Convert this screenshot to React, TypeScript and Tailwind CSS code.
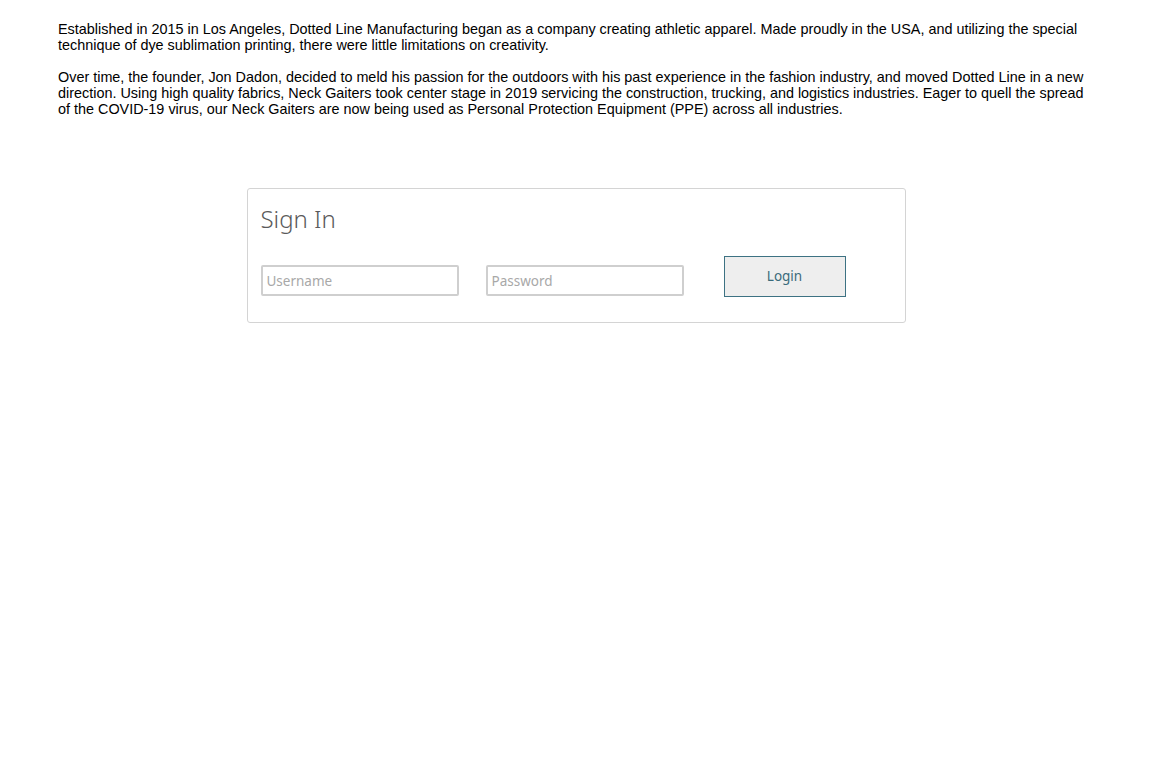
export default function App() {
  return (
    <div className="min-h-screen w-full bg-white">
      <div className="pl-[58px] pr-[60px] pt-[21px] font-['Liberation_Sans',Arial,sans-serif] text-[14.4px] leading-4 text-black">
        <p>
          Established in 2015 in Los Angeles, Dotted Line Manufacturing began as a company creating athletic apparel. Made proudly in the USA, and utilizing the special technique of dye sublimation printing, there were little limitations on creativity.
        </p>
        <p className="mt-4">
          Over time, the founder, Jon Dadon, decided to meld his passion for the outdoors with his past experience in the fashion industry, and moved Dotted Line in a new direction. Using high quality fabrics, Neck Gaiters took center stage in 2019 servicing the construction, trucking, and logistics industries. Eager to quell the spread of the COVID-19 virus, our Neck Gaiters are now being used as Personal Protection Equipment (PPE) across all industries.
        </p>
      </div>

      <div className="mt-[71px] flex justify-center">
        <div className="w-[659px] rounded-[3px] border border-[#d4d4d4] px-[13px] pb-[25px] pt-[14px] font-['Noto_Sans',sans-serif]">
          <h2 className="text-[24px] font-light leading-8 text-[#5a5a5a]">Sign In</h2>
          <div className="mt-[21px] flex items-end">
            <input
              type="text"
              placeholder="Username"
              className="mb-[1px] h-[31px] w-[198px] rounded-[2px] border-2 border-[#cfcfcf] px-[4px] text-[13.5px] text-[#555] placeholder:text-[#a8a8a8] outline-none"
            />
            <input
              type="password"
              placeholder="Password"
              className="mb-[1px] ml-[27px] h-[31px] w-[198px] rounded-[2px] border-2 border-[#cfcfcf] px-[4px] text-[13.5px] text-[#555] placeholder:text-[#a8a8a8] outline-none"
            />
            <button
              type="button"
              className="ml-[40px] h-[41px] w-[122px] border border-[#3d7283] bg-[#eeeeee] text-[13.5px] font-normal text-[#3a6b7b]"
            >
              Login
            </button>
          </div>
        </div>
      </div>
    </div>
  );
}
